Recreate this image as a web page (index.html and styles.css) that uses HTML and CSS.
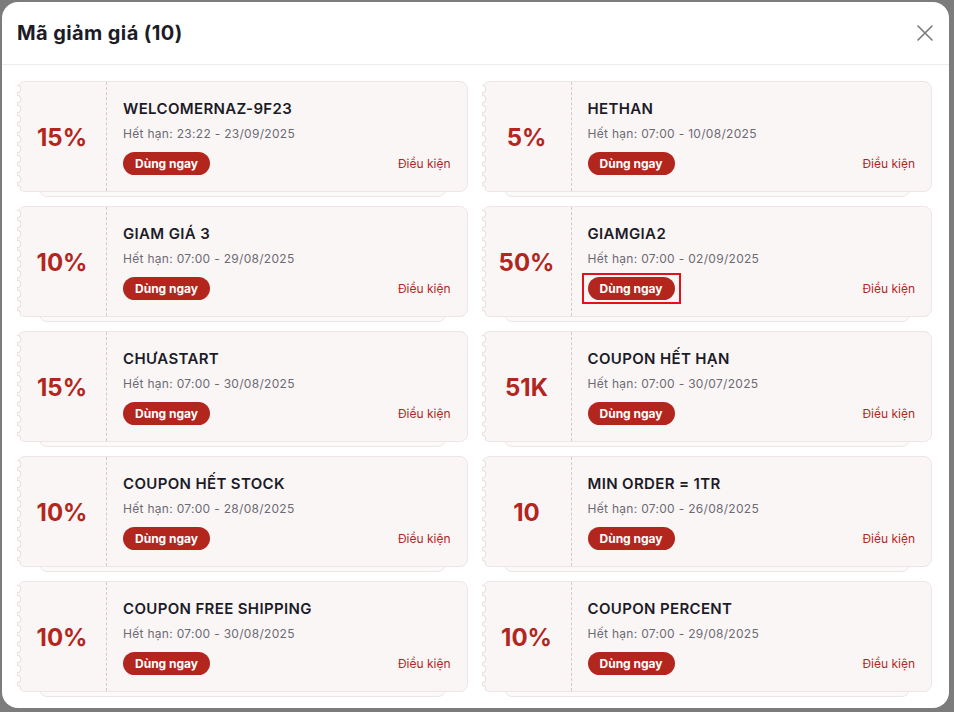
FILE: index.html
```html
<!DOCTYPE html>
<html lang="vi">
<head>
    <meta charset="UTF-8">
    <meta name="viewport" content="width=device-width, initial-scale=1.0">
    <title>Mã giảm giá</title>
    <link rel="stylesheet" href="styles.css">
</head>
<body>
    <!-- Coupon modal -->
    <div class="modal">
        <div class="modal-header">
            <h2>Mã giảm giá (10)</h2>
            <button class="close-btn" aria-label="Đóng">
                <svg width="16" height="16" viewBox="0 0 16 16"><path d="M1 1L15 15M15 1L1 15" stroke="#7a7a7a" stroke-width="1.6" stroke-linecap="round"/></svg>
            </button>
        </div>

        <div class="modal-body">
            <div class="coupon-list">
                <div class="coupon">
                    <div class="coupon-value">15%</div>
                    <div class="coupon-info">
                        <h3>WELCOMERNAZ-9F23</h3>
                        <p>Hết hạn: 23:22 - 23/09/2025</p>
                        <div class="coupon-actions">
                            <button class="use-btn">Dùng ngay</button>
                            <a href="#" class="terms">Điều kiện</a>
                        </div>
                    </div>
                </div>

                <div class="coupon">
                    <div class="coupon-value">5%</div>
                    <div class="coupon-info">
                        <h3>HETHAN</h3>
                        <p>Hết hạn: 07:00 - 10/08/2025</p>
                        <div class="coupon-actions">
                            <button class="use-btn">Dùng ngay</button>
                            <a href="#" class="terms">Điều kiện</a>
                        </div>
                    </div>
                </div>

                <div class="coupon">
                    <div class="coupon-value">10%</div>
                    <div class="coupon-info">
                        <h3>GIAM GIÁ 3</h3>
                        <p>Hết hạn: 07:00 - 29/08/2025</p>
                        <div class="coupon-actions">
                            <button class="use-btn">Dùng ngay</button>
                            <a href="#" class="terms">Điều kiện</a>
                        </div>
                    </div>
                </div>

                <div class="coupon">
                    <div class="coupon-value">50%</div>
                    <div class="coupon-info">
                        <h3>GIAMGIA2</h3>
                        <p>Hết hạn: 07:00 - 02/09/2025</p>
                        <div class="coupon-actions">
                            <span class="focus-ring"><button class="use-btn">Dùng ngay</button></span>
                            <a href="#" class="terms">Điều kiện</a>
                        </div>
                    </div>
                </div>

                <div class="coupon">
                    <div class="coupon-value">15%</div>
                    <div class="coupon-info">
                        <h3>CHƯASTART</h3>
                        <p>Hết hạn: 07:00 - 30/08/2025</p>
                        <div class="coupon-actions">
                            <button class="use-btn">Dùng ngay</button>
                            <a href="#" class="terms">Điều kiện</a>
                        </div>
                    </div>
                </div>

                <div class="coupon">
                    <div class="coupon-value">51K</div>
                    <div class="coupon-info">
                        <h3>COUPON HẾT HẠN</h3>
                        <p>Hết hạn: 07:00 - 30/07/2025</p>
                        <div class="coupon-actions">
                            <button class="use-btn">Dùng ngay</button>
                            <a href="#" class="terms">Điều kiện</a>
                        </div>
                    </div>
                </div>

                <div class="coupon">
                    <div class="coupon-value">10%</div>
                    <div class="coupon-info">
                        <h3>COUPON HẾT STOCK</h3>
                        <p>Hết hạn: 07:00 - 28/08/2025</p>
                        <div class="coupon-actions">
                            <button class="use-btn">Dùng ngay</button>
                            <a href="#" class="terms">Điều kiện</a>
                        </div>
                    </div>
                </div>

                <div class="coupon">
                    <div class="coupon-value">10</div>
                    <div class="coupon-info">
                        <h3>MIN ORDER = 1TR</h3>
                        <p>Hết hạn: 07:00 - 26/08/2025</p>
                        <div class="coupon-actions">
                            <button class="use-btn">Dùng ngay</button>
                            <a href="#" class="terms">Điều kiện</a>
                        </div>
                    </div>
                </div>

                <div class="coupon">
                    <div class="coupon-value">10%</div>
                    <div class="coupon-info">
                        <h3>COUPON FREE SHIPPING</h3>
                        <p>Hết hạn: 07:00 - 30/08/2025</p>
                        <div class="coupon-actions">
                            <button class="use-btn">Dùng ngay</button>
                            <a href="#" class="terms">Điều kiện</a>
                        </div>
                    </div>
                </div>

                <div class="coupon">
                    <div class="coupon-value">10%</div>
                    <div class="coupon-info">
                        <h3>COUPON PERCENT</h3>
                        <p>Hết hạn: 07:00 - 29/08/2025</p>
                        <div class="coupon-actions">
                            <button class="use-btn">Dùng ngay</button>
                            <a href="#" class="terms">Điều kiện</a>
                        </div>
                    </div>
                </div>
            </div>
        </div>
    </div>
</body>
</html>
```

FILE: styles.css
```css
/* Basic Reset */
* {
    margin: 0;
    padding: 0;
    box-sizing: border-box;
}

body {
    font-family: Inter, "Noto Sans", Arial, sans-serif;
    background-color: #7c7c7c;
    height: 712px;
    overflow: hidden;
    padding: 2px 5px 0 2px;
}

/* Modal */
.modal {
    width: 947px;
    height: 706px;
    background-color: #fff;
    border-radius: 16px;
    display: flex;
    flex-direction: column;
    overflow: hidden;
}

.modal-header {
    height: 63px;
    flex-shrink: 0;
    display: flex;
    align-items: center;
    justify-content: space-between;
    padding: 0 16px 0 15px;
    border-bottom: 1px solid #ececec;
}

.modal-header h2 {
    font-size: 20px;
    font-weight: 700;
    color: #1c1c28;
    letter-spacing: 0.4px;
}

.close-btn {
    background: none;
    border: none;
    display: flex;
    cursor: pointer;
}

.modal-body {
    flex: 1;
    overflow-y: auto;
    scrollbar-width: none;
    padding: 16px 17px 16px 15px;
}

/* Coupon list */
.coupon-list {
    display: grid;
    grid-template-columns: 1fr 1fr;
    column-gap: 14px;
    row-gap: 14px;
    isolation: isolate;
}

.coupon {
    position: relative;
    height: 111px;
    display: flex;
    background-color: #fbf6f6;
    border: 1px solid #efe5e5;
    border-radius: 8px;
}

/* scalloped left edge */
.coupon::before {
    content: "";
    position: absolute;
    left: -1px;
    top: 2px;
    bottom: 2px;
    width: 5px;
    background-image: radial-gradient(circle at 0 50%, #fff 3px, #e9dede 3.6px, #e9dede 4px, transparent 4.6px);
    background-size: 5px 10px;
    background-repeat: repeat-y;
}

/* stacked card behind */
.coupon::after {
    content: "";
    position: absolute;
    left: 21px;
    right: 21px;
    bottom: -6px;
    height: 30px;
    background-color: #fcf9f9;
    border: 1px solid #efe5e5;
    border-radius: 8px;
    z-index: -1;
}

.coupon-value {
    width: 89px;
    flex-shrink: 0;
    display: flex;
    align-items: center;
    justify-content: center;
    border-right: 1px dashed #d6c9c9;
    font-size: 24px;
    font-weight: 700;
    color: #b3261e;
    padding-top: 1px;
}

.coupon-info {
    flex: 1;
    padding: 17px 16px 0 16px;
}

.coupon-info h3 {
    font-size: 15px;
    font-weight: 600;
    line-height: 20px;
    letter-spacing: 0.35px;
    color: #1c1c28;
}

.coupon-info p {
    font-size: 12px;
    line-height: 18px;
    margin-top: 6px;
    letter-spacing: 0.3px;
    color: #6b6b74;
}

.coupon-actions {
    display: flex;
    align-items: center;
    justify-content: space-between;
    margin-top: 9px;
}

.use-btn {
    height: 23px;
    padding: 0 12px;
    border: none;
    border-radius: 12px;
    background-color: #b3261e;
    color: #fff;
    font-family: inherit;
    font-size: 12px;
    font-weight: 700;
    cursor: pointer;
}

.focus-ring {
    display: inline-flex;
    border: 2px solid #e2121c;
    padding: 2px 4px;
    margin: -4px -6px;
}

.terms {
    font-size: 12px;
    color: #b3261e;
    text-decoration: none;
}
```
